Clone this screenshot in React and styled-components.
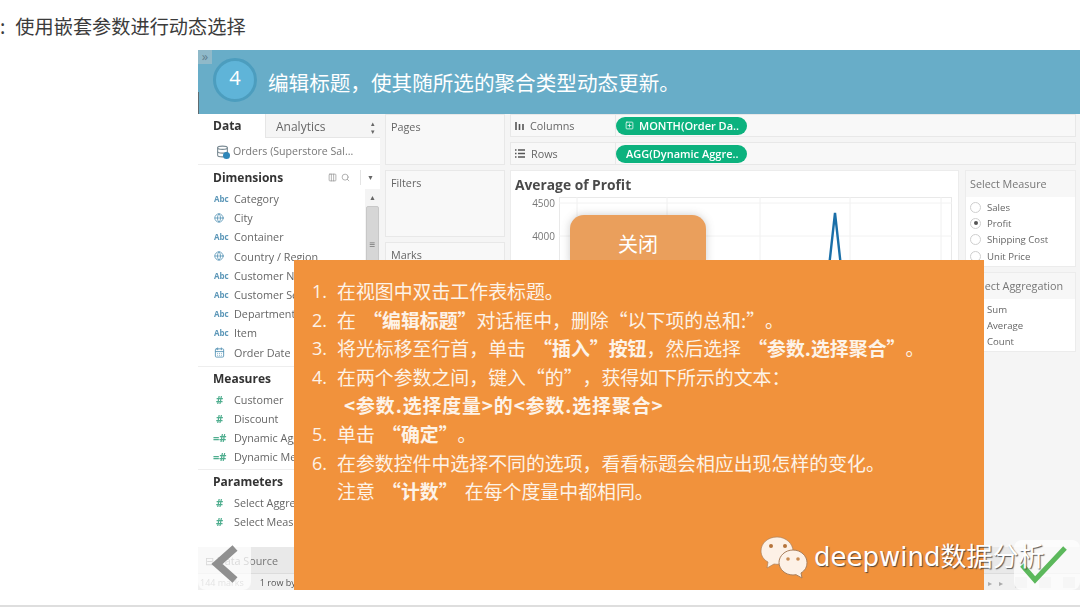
import React from "react";
import styled, { createGlobalStyle } from "styled-components";
import { Globe, Search, Columns3, Database, CalendarDays, SquarePlus } from "lucide-react";

const CJK = `"Noto Sans CJK SC", "Noto Sans", sans-serif`;
const UI = `"Open Sans", "Noto Sans", sans-serif`;

const GlobalStyle = createGlobalStyle`
  html, body { margin: 0; padding: 0; background: #fff; }
  * { box-sizing: border-box; text-spacing-trim: space-all; }
`;

const Page = styled.div`
  width: 1080px;
  height: 608px;
  overflow: hidden;
  background: #fff;
  font-family: ${CJK};
`;

const Heading = styled.h1`
  margin: 0;
  height: 50px;
  padding: 13px 0 0 0;
  display: flex;
  gap: 10px;
  font-size: 19.2px;
  line-height: 26px;
  font-weight: 400;
  color: #3b3b3b;
`;

const Slide = styled.div`
  position: relative;
  margin-left: 198px;
  width: 882px;
  height: 540px;
  display: flex;
  flex-direction: column;
`;

const Banner = styled.header`
  height: 64px;
  flex: none;
  display: flex;
  align-items: center;
  gap: 11px;
  padding-left: 15px;
  background: #68adc8;
`;

const StepBadge = styled.div`
  width: 44px;
  height: 44px;
  margin-bottom: 4px;
  border-radius: 50%;
  background: #5fb4d8;
  border: 3px solid #4c9dbe;
  color: #fff;
  display: flex;
  align-items: center;
  justify-content: center;
  padding-bottom: 6px;
  font: 400 20px ${UI};
`;

const BannerTitle = styled.div`
  color: #fff;
  font-size: 20.6px;
  line-height: 28px;
  font-weight: 400;
`;

const Collapse = styled.div`
  position: absolute;
  left: 0;
  top: 0;
  width: 14px;
  height: 14px;
  background: #8fb9c9;
  color: #61808e;
  font: 400 13px/12px ${UI};
  text-align: center;
`;

const EdgeMark = styled.div`
  position: absolute;
  left: 0;
  top: 42px;
  width: 1px;
  height: 22px;
  background: #5f6b70;
`;

const Body = styled.div`
  flex: 1;
  min-height: 0;
  display: flex;
  flex-direction: column;
  background: #f5f5f5;
  filter: blur(0.4px);
`;

const Workspace = styled.div`
  flex: 1;
  min-height: 0;
  display: flex;
`;

const DataPane = styled.aside`
  width: 182px;
  margin-right: 5px;
  flex: none;
  background: #fff;
  display: flex;
  flex-direction: column;
  font-family: ${UI};
`;

const Tabs = styled.div`
  height: 24px;
  flex: none;
  display: flex;
`;

const DataTab = styled.div`
  width: 67px;
  padding: 3px 0 0 15px;
  font: 700 12px/18px ${UI};
  color: #333;
`;

const AnalyticsTab = styled.div`
  flex: 1;
  display: flex;
  justify-content: space-between;
  padding: 4px 5px 0 10px;
  background: #f5f5f5;
  border-left: 1px solid #e6e6e6;
  border-bottom: 1px solid #e6e6e6;
  font: 400 12px/18px ${UI};
  color: #666;
`;

const Stepper = styled.span`
  font-size: 7px;
  line-height: 8px;
  padding-top: 2px;
  color: #666;
  text-align: center;
`;

const SourceRow = styled.div`
  height: 27px;
  flex: none;
  display: flex;
  align-items: center;
  gap: 4px;
  padding-left: 18px;
  border-bottom: 1px solid #eee;
  font-size: 10.6px;
  color: #777;
  white-space: nowrap;
`;

const SourceIcon = styled.span`
  position: relative;
  display: flex;
  color: #7a8a93;
  &::after {
    content: "";
    position: absolute;
    right: -1px;
    bottom: -1px;
    width: 7px;
    height: 7px;
    border-radius: 50%;
    background: #2f86b8;
  }
`;

const PaneHead = styled.div`
  height: 24px;
  flex: none;
  display: flex;
  align-items: center;
  padding: 1px 6px 0 15px;
  font: 700 12px ${UI};
  color: #333;
  svg { color: #999; margin-left: 4px; }
`;

const Spacer = styled.span`
  flex: 1;
`;

const HeadCaret = styled.span`
  margin-left: 10px;
  padding-left: 6px;
  border-left: 1px solid #e4e4e4;
  font-size: 7px;
  line-height: 15px;
  color: #666;
`;

const ListArea = styled.div`
  flex: 1;
  min-height: 0;
  display: flex;
`;

const FieldColumn = styled.div`
  flex: 1;
  min-width: 0;
  display: flex;
  flex-direction: column;
`;

const Field = styled.div`
  height: 19.2px;
  flex: none;
  display: flex;
  align-items: center;
  white-space: nowrap;
  font-size: 10.8px;
  color: #666;
`;

const FieldIcon = styled.span`
  width: 36px;
  flex: none;
  padding-left: ${(p) => p.$inset ?? 16}px;
  display: flex;
  align-items: center;
  font: 700 ${(p) => p.$size ?? 8}px ${UI};
  color: ${(p) => p.$color ?? "#5c97b8"};
`;

const GroupHead = styled.div`
  height: 22px;
  margin-top: ${(p) => p.$top ?? 0}px;
  padding: 2px 0 0 15px;
  border-top: 1px solid #eee;
  flex: none;
  font: 700 12px/20px ${UI};
  color: #333;
`;

const GroupGap = styled.div`
  height: ${(p) => p.$h}px;
  flex: none;
`;

const ScrollStrip = styled.div`
  width: 15px;
  flex: none;
  display: flex;
  flex-direction: column;
  align-items: center;
  background: #f4f4f4;
  color: #666;
  font-size: 7px;
  line-height: 17px;
`;

const ScrollThumb = styled.div`
  width: 13px;
  height: 76px;
  background: #d6d6d6;
  border: 1px solid #c8c8c8;
  border-radius: 2px;
  display: flex;
  align-items: center;
  justify-content: center;
  color: #777;
  font-size: 10px;
`;

const ShelfColumn = styled.div`
  width: 120px;
  margin-right: 5px;
  flex: none;
  display: flex;
  flex-direction: column;
  gap: 5px;
`;

const Shelf = styled.div`
  height: ${(p) => p.$h}px;
  flex: ${(p) => (p.$h ? "none" : 1)};
  background: #f8f8f8;
  border: 1px solid #e8e8e8;
  padding: 4px 5px;
  font: 400 10.8px/16px ${UI};
  color: #666;
`;

const Main = styled.div`
  flex: 1;
  min-width: 0;
  padding-right: 4px;
  display: flex;
  flex-direction: column;
  gap: 5px;
`;

const PillRow = styled.div`
  height: 23px;
  flex: none;
  display: flex;
  align-items: center;
  background: #f8f8f8;
  border: 1px solid #e8e8e8;
`;

const PillLabel = styled.div`
  width: 105px;
  height: 100%;
  padding-left: 4px;
  display: flex;
  align-items: center;
  gap: 6px;
  border-right: 1px solid #e8e8e8;
  font: 400 10.8px ${UI};
  color: #666;
  svg { color: #555; flex: none; }
`;

const Pill = styled.div`
  width: 131px;
  height: 18px;
  margin-left: 0;
  border-radius: 9px;
  background: #0cb27e;
  color: #fff;
  display: flex;
  align-items: center;
  gap: 5px;
  padding-left: ${(p) => p.$pad}px;
  font: 600 11px ${UI};
  white-space: nowrap;
`;

const ViewRow = styled.div`
  flex: 1;
  min-height: 0;
  display: flex;
  gap: 6px;
`;

const ChartCard = styled.section`
  width: 449px;
  flex: none;
  display: flex;
  flex-direction: column;
  background: #fff;
  border: 1px solid #ececec;
`;

const ChartTitle = styled.div`
  height: 26px;
  flex: none;
  padding: 5px 0 0 4px;
  font: 700 13.8px/18px ${UI};
  color: #4a4a4a;
`;

const ChartBody = styled.div`
  flex: 1;
  display: flex;
`;

const AxisLabels = styled.div`
  width: 48px;
  flex: none;
  padding-right: 4px;
  margin-top: -1px;
  display: flex;
  flex-direction: column;
  gap: 19px;
  text-align: right;
  font: 400 10px/14px ${UI};
  color: #777;
`;

const Controls = styled.div`
  flex: 1;
  display: flex;
  flex-direction: column;
  gap: 5px;
`;

const ControlCard = styled.div`
  height: ${(p) => p.$h}px;
  flex: none;
  background: #fff;
  border: 1px solid #ececec;
`;

const ControlHead = styled.div`
  height: 26px;
  padding: 5px 0 0 4px;
  background: #f7f7f7;
  font: 400 10.8px/16px ${UI};
  color: #777;
`;

const RadioRow = styled.div`
  height: 16.3px;
  display: flex;
  align-items: center;
  gap: 6px;
  padding-left: 4px;
  font: 400 9.6px ${UI};
  color: #666;
  white-space: nowrap;
`;

const Radio = styled.span`
  width: 11px;
  height: 11px;
  flex: none;
  border-radius: 50%;
  border: 1px solid #cfcfcf;
  background: #fff;
  display: flex;
  align-items: center;
  justify-content: center;
  &::after {
    content: "";
    width: 4px;
    height: 4px;
    border-radius: 50%;
    background: ${(p) => (p.$on ? "#555" : "transparent")};
  }
`;

const RadioList = styled.div`
  padding-top: 2px;
`;

const SheetBar = styled.div`
  height: 27px;
  flex: none;
  display: flex;
  align-items: center;
  gap: 3px;
  padding-left: 7px;
  background: #e9e9e9;
  border-bottom: 1px solid #dcdcdc;
  font: 400 10.8px ${UI};
  color: #777;
`;

const StatusBar = styled.div`
  height: 16px;
  flex: none;
  display: flex;
  align-items: center;
  gap: 16px;
  padding: 0 5px 0 2px;
  background: #f0f0f0;
  font: 400 9px ${UI};
  color: #555;
`;

const StatusFaint = styled.span`
  color: #999;
`;

const StatusIcons = styled.span`
  margin-left: auto;
  display: flex;
  align-items: center;
  gap: 7px;
  color: #aaa;
  font-size: 8px;
`;

const ViewSquare = styled.span`
  width: 12px;
  height: 11px;
  margin-left: 5px;
  background: #ddd;
`;

const CloseTab = styled.div`
  position: absolute;
  left: 372px;
  top: 165px;
  width: 136px;
  height: 50px;
  padding-top: 15px;
  border-radius: 14px 14px 0 0;
  background: #ea9f5c;
  box-shadow: 0 0 8px rgba(90, 90, 90, 0.3);
  color: #fff;
  text-align: center;
  font-size: 20px;
  line-height: 28px;
`;

const NotePanel = styled.div`
  position: absolute;
  left: 96px;
  top: 210px;
  width: 690px;
  height: 330px;
  padding: 17px 0 0 18px;
  background: #f1923c;
  color: #fdf3e8;
  font-size: 18.9px;
  line-height: 28.6px;
  word-spacing: 3px;
`;

const NoteLine = styled.div`
  height: 28.6px;
  display: flex;
  white-space: pre;
  padding-left: ${(p) => p.$indent ?? 0}px;
  letter-spacing: ${(p) => p.$track ?? 0}px;
`;

const NoteNumber = styled.span`
  width: 25px;
  flex: none;
  font-family: ${UI};
  font-size: 18px;
`;

const Strong = styled.b`
  font-weight: 700;
`;

const NavButton = styled.div`
  position: absolute;
  top: 490px;
  height: 50px;
  background: rgba(255, 255, 255, 0.72);
  border-radius: 8px;
`;

const BackButton = styled(NavButton)`
  left: 0;
  width: 53px;
`;

const ConfirmButton = styled(NavButton)`
  left: 816px;
  width: 66px;
`;

const Watermark = styled.div`
  position: absolute;
  left: 562px;
  top: 485px;
  display: flex;
  align-items: center;
  gap: 6px;
  color: #fff;
  font: 400 26px/42px "DejaVu Sans", ${CJK};
  white-space: nowrap;
  text-shadow: 1px 1px 1px rgba(60, 60, 60, 0.85);
`;

const Rule = styled.hr`
  margin: 15px 0 0;
  border: 0;
  height: 2px;
  background: #dedede;
`;

const Abc = () => <FieldIcon>Abc</FieldIcon>;
const Geo = () => (
  <FieldIcon>
    <Globe size={10} color="#5c97b8" />
  </FieldIcon>
);
const Hash = () => (
  <FieldIcon $color="#4fae8f" $size={11} $inset={18}>
    #
  </FieldIcon>
);
const CalcHash = () => (
  <FieldIcon $color="#4fae8f" $size={11} $inset={15}>
    =#
  </FieldIcon>
);

const dimensions = [
  [Abc, "Category"],
  [Geo, "City"],
  [Abc, "Container"],
  [Geo, "Country / Region"],
  [Abc, "Customer Name"],
  [Abc, "Customer Segment"],
  [Abc, "Department"],
  [Abc, "Item"],
];
const measures = [
  [Hash, "Customer"],
  [Hash, "Discount"],
  [CalcHash, "Dynamic Aggregation"],
  [CalcHash, "Dynamic Measure"],
];
const parameters = [
  [Hash, "Select Aggregation"],
  [Hash, "Select Measure"],
];

const FieldRows = ({ rows }) =>
  rows.map(([Icon, name]) => (
    <Field key={name}>
      <Icon />
      {name}
    </Field>
  ));

const ColumnsGlyph = () => (
  <svg width="9" height="10" viewBox="0 0 9 10">
    <path d="M1 1v8M4.500 3v6M8 3v6" stroke="#555" strokeWidth="1.600" fill="none" />
  </svg>
);

const RowsGlyph = () => (
  <svg width="10" height="9" viewBox="0 0 10 9">
    <path d="M0 1h1.500M3 1h7M0 4.500h1.500M3 4.500h7M0 8h1.500M3 8h7" stroke="#555" strokeWidth="1.300" fill="none" />
  </svg>
);

const ProfitChart = () => (
  <svg width="393" height="344" viewBox="0 0 393 344">
    <rect x="0.5" y="0.5" width="392" height="343" fill="#fff" stroke="#e9e9e9" />
    {[18, 108, 201, 291, 382].map((x) => (
      <line key={x} x1={x} x2={x} y1="0" y2="344" stroke="#f0f0f0" />
    ))}
    {[6, 39, 72].map((y) => (
      <line key={y} x1="0" x2="393" y1={y} y2={y} stroke="#f2f2f2" />
    ))}
    <path d="M270 70 L276 16 L282 70" fill="none" stroke="#1a6fa8" strokeWidth="2.400" />
  </svg>
);

const WeChatMark = () => (
  <svg width="48" height="44" viewBox="0 0 48 44">
    <path
      d="M17 2C8 2 1 8 1 16c0 5 3 9 7 11l-1 6 7-4c1 .2 2 .3 3 .3 9 0 16-6 16-13.300S26 2 17 2z"
      fill="#fdf1e6"
      stroke="#a97f5c"
      strokeWidth="0.700"
    />
    <path
      d="M33 15c-8 0-14 6-14 12.500S25 40 33 40c1 0 2-.1 3-.3l6 3.300-1-5c4-2.500 6-6 6-10.500C47 21 41 15 33 15z"
      fill="#fdf1e6"
      stroke="#a97f5c"
      strokeWidth="1"
    />
    <circle cx="11" cy="11" r="2" fill="#b5743c" />
    <circle cx="25" cy="11" r="2" fill="#b5743c" />
    <circle cx="28" cy="24" r="1.800" fill="#c98a50" />
    <circle cx="38" cy="24" r="1.800" fill="#c98a50" />
  </svg>
);

export default function App() {
  return (
    <>
      <GlobalStyle />
      <Page>
        <Heading>
          <span>:</span>
          <span>使用嵌套参数进行动态选择</span>
        </Heading>
        <Slide>
          <Banner>
            <StepBadge>4</StepBadge>
            <BannerTitle>编辑标题，使其随所选的聚合类型动态更新。</BannerTitle>
          </Banner>
          <Collapse>»</Collapse>
          <EdgeMark />
          <Body>
            <Workspace>
              <DataPane>
                <Tabs>
                  <DataTab>Data</DataTab>
                  <AnalyticsTab>
                    Analytics
                    <Stepper>▴<br />▾</Stepper>
                  </AnalyticsTab>
                </Tabs>
                <SourceRow>
                  <SourceIcon>
                    <Database size={13} />
                  </SourceIcon>
                  Orders (Superstore Sal...
                </SourceRow>
                <PaneHead>
                  Dimensions
                  <Spacer />
                  <Columns3 size={9} />
                  <Search size={9} />
                  <HeadCaret>▼</HeadCaret>
                </PaneHead>
                <ListArea>
                  <FieldColumn>
                    <FieldRows rows={dimensions} />
                    <Field>
                      <FieldIcon>
                        <CalendarDays size={11} color="#5c97b8" />
                      </FieldIcon>
                      Order Date
                    </Field>
                    <GroupHead $top={4}>Measures</GroupHead>
                    <GroupGap $h={2} />
                    <FieldRows rows={measures} />
                    <GroupHead $top={3}>Parameters</GroupHead>
                    <GroupGap $h={1} />
                    <FieldRows rows={parameters} />
                  </FieldColumn>
                  <ScrollStrip>
                    ▲
                    <ScrollThumb>≡</ScrollThumb>
                  </ScrollStrip>
                </ListArea>
              </DataPane>
              <ShelfColumn>
                <Shelf $h={51}>Pages</Shelf>
                <Shelf $h={67}>Filters</Shelf>
                <Shelf>Marks</Shelf>
              </ShelfColumn>
              <Main>
                <PillRow>
                  <PillLabel>
                    <ColumnsGlyph />
                    Columns
                  </PillLabel>
                  <Pill $pad={9}>
                    <SquarePlus size={9} />
                    MONTH(Order Da..
                  </Pill>
                </PillRow>
                <PillRow>
                  <PillLabel>
                    <RowsGlyph />
                    Rows
                  </PillLabel>
                  <Pill $pad={10}>AGG(Dynamic Aggre..</Pill>
                </PillRow>
                <ViewRow>
                  <ChartCard>
                    <ChartTitle>Average of Profit</ChartTitle>
                    <ChartBody>
                      <AxisLabels>
                        <span>4500</span>
                        <span>4000</span>
                      </AxisLabels>
                      <ProfitChart />
                    </ChartBody>
                  </ChartCard>
                  <Controls>
                    <ControlCard $h={97}>
                      <ControlHead>Select Measure</ControlHead>
                      <RadioList>
                        <RadioRow><Radio />Sales</RadioRow>
                        <RadioRow><Radio $on />Profit</RadioRow>
                        <RadioRow><Radio />Shipping Cost</RadioRow>
                        <RadioRow><Radio />Unit Price</RadioRow>
                      </RadioList>
                    </ControlCard>
                    <ControlCard $h={80}>
                      <ControlHead>Select Aggregation</ControlHead>
                      <RadioList>
                        <RadioRow><Radio />Sum</RadioRow>
                        <RadioRow><Radio />Average</RadioRow>
                        <RadioRow><Radio />Count</RadioRow>
                      </RadioList>
                    </ControlCard>
                  </Controls>
                </ViewRow>
              </Main>
            </Workspace>
            <SheetBar>⊟ Data Source</SheetBar>
            <StatusBar>
              <StatusFaint>144 marks</StatusFaint>
              <span>1 row by 1 column</span>
              <StatusIcons>
                <span>◂</span>
                <span>◂</span>
                <span>▸</span>
                <span>▸</span>
                <ViewSquare />
                <ViewSquare />
                <ViewSquare />
              </StatusIcons>
            </StatusBar>
          </Body>

          <CloseTab>关闭</CloseTab>
          <NotePanel>
            <NoteLine><NoteNumber>1.</NoteNumber><span>在视图中双击工作表标题。</span></NoteLine>
            <NoteLine><NoteNumber>2.</NoteNumber><span>在 <Strong>“编辑标题”</Strong>对话框中，删除“以下项的总和:”。</span></NoteLine>
            <NoteLine><NoteNumber>3.</NoteNumber><span>将光标移至行首，单击 <Strong>“插入”按钮</Strong>，然后选择 <Strong>“参数.选择聚合”</Strong>。</span></NoteLine>
            <NoteLine><NoteNumber>4.</NoteNumber><span>在两个参数之间，键入“的”，获得如下所示的文本：</span></NoteLine>
            <NoteLine $indent={32} $track={0.9}><Strong>&lt;参数.选择度量&gt;的&lt;参数.选择聚合&gt;</Strong></NoteLine>
            <NoteLine><NoteNumber>5.</NoteNumber><span>单击 <Strong>“确定”</Strong>。</span></NoteLine>
            <NoteLine><NoteNumber>6.</NoteNumber><span>在参数控件中选择不同的选项，看看标题会相应出现怎样的变化。</span></NoteLine>
            <NoteLine $indent={25}><span>注意 <Strong>“计数”</Strong> 在每个度量中都相同。</span></NoteLine>
          </NotePanel>

          <BackButton>
            <svg width="53" height="50" viewBox="0 0 53 50">
              <path d="M37 8 L19 24 L37 40" fill="none" stroke="#909090" strokeWidth="7.500" />
            </svg>
          </BackButton>
          <ConfirmButton>
            <svg width="66" height="50" viewBox="0 0 66 50">
              <path d="M8 25 L21 40 L51 8" fill="none" stroke="#5cb85c" strokeWidth="5" />
            </svg>
          </ConfirmButton>
          <Watermark>
            <WeChatMark />
            deepwind数据分析
          </Watermark>
        </Slide>
        <Rule />
      </Page>
    </>
  );
}
